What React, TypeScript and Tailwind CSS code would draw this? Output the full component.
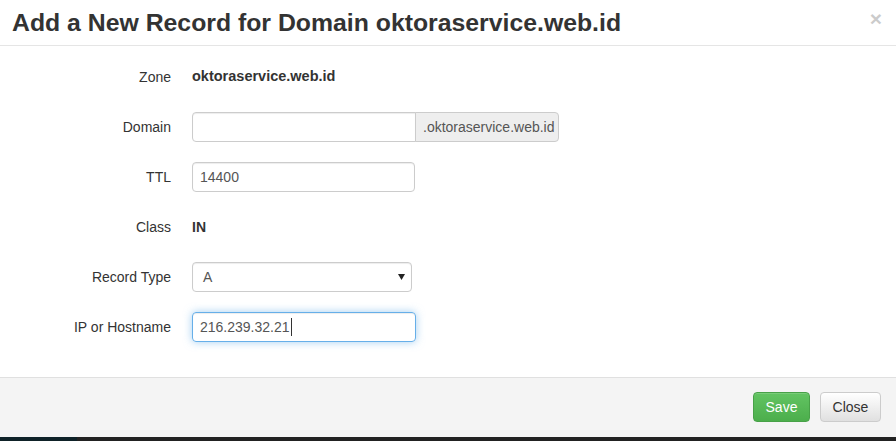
import React from "react";

const font = { fontFamily: '"Liberation Sans", Arial, sans-serif' };

function Row({ label, children }: { label: string; children: React.ReactNode }) {
  return (
    <div className="flex items-center h-[30px]">
      <div className="w-[171px] text-right text-[14px] text-[#333]">{label}</div>
      <div className="ml-[21px] flex items-center">{children}</div>
    </div>
  );
}

export default function App() {
  return (
    <div className="w-[896px] h-[441px] bg-white flex flex-col overflow-hidden text-[#333]" style={font}>
      <div className="h-[46px] flex items-center px-[12px] border-b border-[#e5e5e5] relative shrink-0">
        <h4 className="text-[24.8px] leading-[26px] font-bold text-[#333] m-0">
          Add a New Record for Domain oktoraservice.web.id
        </h4>
        <span className="absolute right-[14px] top-[8px] text-[21px] font-bold leading-[21px] text-black opacity-20">×</span>
      </div>
      <div className="flex flex-col gap-[20px] pt-[16px] pb-[35px] shrink-0">
        <Row label="Zone">
          <span className="text-[14.5px] font-bold">oktoraservice.web.id</span>
        </Row>
        <Row label="Domain">
          <div className="flex">
            <div className="w-[224px] h-[30px] border border-[#ccc] rounded-l-[4px] bg-white shadow-[inset_0_1px_1px_rgba(0,0,0,0.075)]" />
            <div className="h-[30px] -ml-px pl-[7px] pr-[3px] flex items-center bg-[#eee] border border-[#ccc] rounded-r-[4px] text-[14px] text-[#555]">
              .oktoraservice.web.id
            </div>
          </div>
        </Row>
        <Row label="TTL">
          <div className="w-[223px] h-[30px] border border-[#ccc] rounded-[4px] flex items-center pl-[7px] text-[14px] text-[#555] shadow-[inset_0_1px_1px_rgba(0,0,0,0.075)]">
            14400
          </div>
        </Row>
        <Row label="Class">
          <span className="text-[14px] font-bold">IN</span>
        </Row>
        <Row label="Record Type">
          <div className="w-[220px] h-[30px] border border-[#ccc] rounded-[4px] flex items-center justify-between pl-[10px] pr-[5px] text-[14px] text-[#555] shadow-[inset_0_1px_1px_rgba(0,0,0,0.075)]">
            <span>A</span>
            <svg width="8" height="6" viewBox="0 0 8 6"><path d="M0 0h7L3.5 6z" fill="#222" /></svg>
          </div>
        </Row>
        <Row label="IP or Hostname">
          <div className="w-[224px] h-[30px] border border-[#66afe9] rounded-[4px] flex items-center pl-[7px] text-[14px] text-[#555] shadow-[inset_0_1px_1px_rgba(0,0,0,0.075),0_0_8px_rgba(102,175,233,0.6)]">
            216.239.32.21<span className="inline-block w-px h-[18px] bg-[#333] ml-[1px]" />
          </div>
        </Row>
      </div>
      <div className="flex-1 bg-[#f4f4f4] border-t border-[#e0e0e0] flex justify-end items-start pt-[14px] pr-[15px] gap-[10px]">
        <button className="h-[30px] w-[57px] rounded-[4px] text-white text-[14px] border border-[#48a148] bg-gradient-to-b from-[#62c462] to-[#4cae4c] shadow-[inset_0_1px_0_rgba(255,255,255,0.15)]" style={font}>
          Save
        </button>
        <button className="h-[30px] w-[61px] rounded-[4px] text-[#333] text-[14px] border border-[#ccc] bg-gradient-to-b from-white to-[#e0e0e0]" style={font}>
          Close
        </button>
      </div>
      <div className="h-[4px] flex shrink-0">
        <div className="w-[77px] bg-[#0f2228]" />
        <div className="flex-1 bg-[#222]" />
      </div>
    </div>
  );
}
